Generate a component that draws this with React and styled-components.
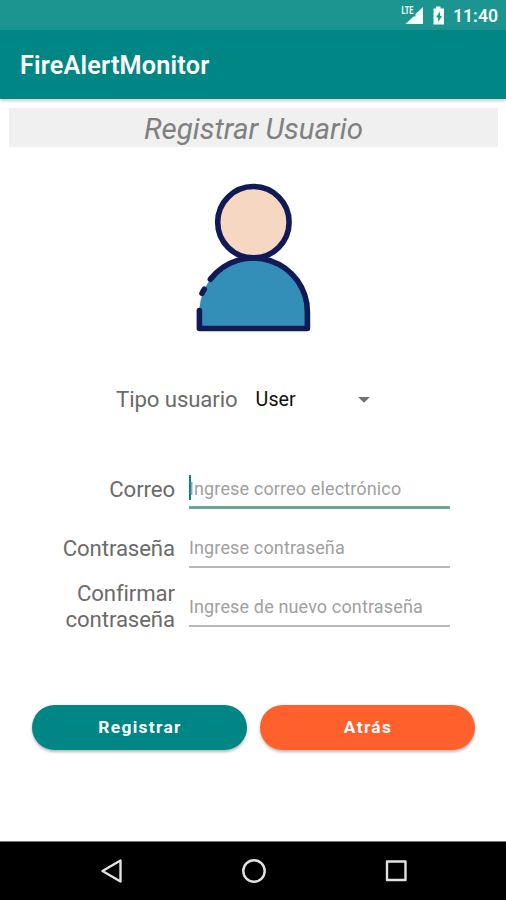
import styled, { createGlobalStyle } from "styled-components";
import { useState } from "react";


const GlobalStyle = createGlobalStyle`
  * {
    box-sizing: border-box;
  }

  body {
    margin: 0;
    background-color: #fff;
    font-family: Roboto, sans-serif;
  }
`;

const Screen = styled.div`
  width: 506px;
  height: 900px;
  display: flex;
  flex-direction: column;
  overflow: hidden;
  background-color: #fff;
`;

const StatusBar = styled.div`
  height: 30px;
  flex-shrink: 0;
  display: flex;
  justify-content: flex-end;
  align-items: center;
  padding: 2px 9px 0 0;
  background-color: #1c9590;
  color: #f2fffd;
`;

const Clock = styled.span`
  width: 44px;
  margin-left: 8px;
  font-size: 17.6px;
  font-weight: 600;
  line-height: 20px;
  white-space: nowrap;
`;

const AppBar = styled.header`
  height: 69px;
  flex-shrink: 0;
  display: flex;
  align-items: center;
  padding: 2px 20px 0;
  background-color: #008684;
  box-shadow: 0 2px 3px rgba(0, 0, 0, 0.2);
`;

const AppTitle = styled.h1`
  margin: 0;
  color: #fff;
  font-size: 25.2px;
  font-weight: 600;
  line-height: 30px;
  letter-spacing: 0.2px;
`;

const Content = styled.main`
  flex: 1;
  padding: 9px 8px 0 9px;
`;

const PageTitle = styled.h2`
  height: 39px;
  margin: 0;
  background-color: #f0f0f0;
  color: #808080;
  font-size: 29.5px;
  font-style: italic;
  font-weight: 400;
  line-height: 42px;
  text-align: center;
`;

const Avatar = styled.svg`
  display: block;
  width: 124px;
  height: 154px;
  margin: 34px auto 0 182px;
`;

const TypeRow = styled.div`
  height: 40px;
  margin-top: 43px;
  padding: 1px 0 0 107px;
  display: flex;
  align-items: center;
`;

const Label = styled.label`
  color: #6b6b6b;
  font-size: 22.2px;
  line-height: 26px;
  letter-spacing: -0.1px;
  text-align: right;
`;

const Spinner = styled.button`
  width: 115px;
  margin-left: 18px;
  padding: 2px 0 0;
  display: flex;
  justify-content: space-between;
  align-items: center;
  border: none;
  background: none;
  color: #111;
  font-family: inherit;
  font-size: 19.7px;
  line-height: 26px;
`;

const Form = styled.form`
  margin-top: 41px;
`;

const FormRow = styled.div`
  height: 59px;
  display: grid;
  grid-template-columns: 166px 261px;
  column-gap: 14px;
  align-items: center;

  ${Label} {
    margin-top: 1px;
  }

  &:nth-child(3) ${Label} {
    margin-top: -2px;
  }
`;

const InputBox = styled.div`
  height: 40px;
  align-self: start;
  margin-top: 10px;
  display: flex;
  align-items: flex-start;
  border-bottom: ${(props) => (props.$focused ? "3px solid #67a79e" : "2px solid #b9b9b9")};
`;

const Cursor = styled.span`
  width: 2px;
  height: 25px;
  margin: 6px -2px 0 0;
  background-color: #008577;
`;

const Input = styled.input`
  width: 100%;
  height: 36px;
  padding: 2px 0 0;
  border: none;
  outline: none;
  background: none;
  color: #111;
  font-family: inherit;
  font-size: 18px;
  letter-spacing: 0.14px;

  &::placeholder {
    color: #a0a0a0;
    opacity: 1;
  }
`;

const Actions = styled.div`
  margin-top: 69px;
  padding: 0 23px;
  display: flex;
  gap: 13px;
`;

const Button = styled.button`
  flex: 1;
  height: 45px;
  padding: 0 0 1px 1px;
  border: none;
  border-radius: 23px;
  background-color: ${(props) => props.$color};
  box-shadow: 0 2px 3px rgba(0, 0, 0, 0.28);
  color: #fff;
  font-family: inherit;
  font-size: 17.4px;
  font-weight: 700;
  letter-spacing: 1.3px;
`;

const NavBar = styled.nav`
  height: 59px;
  flex-shrink: 0;
  display: flex;
  justify-content: center;
  align-items: center;
  gap: 116px;
  padding-left: 1px;
  border-top: 1px solid #777;
  background-color: #000;
`;

const NavIcon = styled.svg`
  width: 26px;
  height: 26px;
  fill: none;
  stroke: #e2e2e2;
  stroke-width: 2.4;
  stroke-linejoin: round;
`;


const fields = [
  { id: "email", label: "Correo", type: "email", placeholder: "Ingrese correo electrónico" },
  { id: "password", label: "Contraseña", type: "password", placeholder: "Ingrese contraseña" },
  { id: "confirm", label: "Confirmar contraseña", type: "password", placeholder: "Ingrese de nuevo contraseña" },
];


const StatusIcons = () => (
  <svg width="44" height="22" viewBox="0 0 44 22">
    <path d="M22 2v17H4.500l8-7.500h2V9z" fill="currentColor" />
    <text x="0.500" y="9" fill="currentColor" fontFamily="Roboto" fontSize="10" fontWeight="700" textLength="12" lengthAdjust="spacingAndGlyphs">LTE</text>
    <path d="M35 1.500h4.500v2H43v16H32.500v-16H35z" fill="currentColor" />
    <path d="M39 6.500l-4 6h2.200v4.500l3.800-6h-2z" fill="#1c9590" />
  </svg>
);

const UserAvatar = () => (
  <Avatar viewBox="191 181 124 154" fill="none" stroke="#101a57" strokeWidth="5.600" strokeLinecap="round" strokeLinejoin="round">
    <path d="M199.400 328.500V312A54 54 0 0 1 307.400 312V328.500Z" fill="#338fb7" stroke="none" />
    <path d="M210.400 279.300A54 54 0 0 1 307.400 312V328.500H199.400V310.500" />
    <path d="M204.300 289.200L202 293.300" />
    <circle cx="253.400" cy="222.200" r="35.700" fill="#f6d7c1" />
  </Avatar>
);


const App = () => {
  const [values, setValues] = useState({ email: "", password: "", confirm: "" });
  const [focused, setFocused] = useState("email");

  function handleChange(e) {
    setValues({ ...values, [e.target.id]: e.target.value });
  }

  return (
    <>
      <GlobalStyle />
      <Screen>
        <StatusBar>
          <StatusIcons />
          <Clock>11:40</Clock>
        </StatusBar>
        <AppBar>
          <AppTitle>FireAlertMonitor</AppTitle>
        </AppBar>

        <Content>
          <PageTitle>Registrar Usuario</PageTitle>
          <UserAvatar />

          <TypeRow>
            <Label htmlFor="type">Tipo usuario</Label>
            <Spinner id="type" type="button">
              User
              <svg width="16" height="8" viewBox="0 0 16 8">
                <path d="M3 1h12L9 6.800z" fill="#737373" />
              </svg>
            </Spinner>
          </TypeRow>

          <Form onSubmit={(e) => e.preventDefault()}>
            {fields.map((field) => (
              <FormRow key={field.id}>
                <Label htmlFor={field.id}>{field.label}</Label>
                <InputBox $focused={focused === field.id}>
                  {focused === field.id && !values[field.id] && <Cursor />}
                  <Input
                    id={field.id}
                    type={field.type}
                    placeholder={field.placeholder}
                    value={values[field.id]}
                    onChange={handleChange}
                    onFocus={() => setFocused(field.id)}
                  />
                </InputBox>
              </FormRow>
            ))}
            <Actions>
              <Button type="submit" $color="#008684">Registrar</Button>
              <Button type="button" $color="#ff602c">Atrás</Button>
            </Actions>
          </Form>
        </Content>

        <NavBar>
          <NavIcon viewBox="0 0 26 26">
            <path d="M21.500 2.500v21L3.500 13z" />
          </NavIcon>
          <NavIcon viewBox="0 0 26 26">
            <circle cx="13" cy="13" r="10.700" />
          </NavIcon>
          <NavIcon viewBox="0 0 26 26">
            <rect x="4" y="3.500" width="18.500" height="18.500" />
          </NavIcon>
        </NavBar>
      </Screen>
    </>
  );
};

export default App;
